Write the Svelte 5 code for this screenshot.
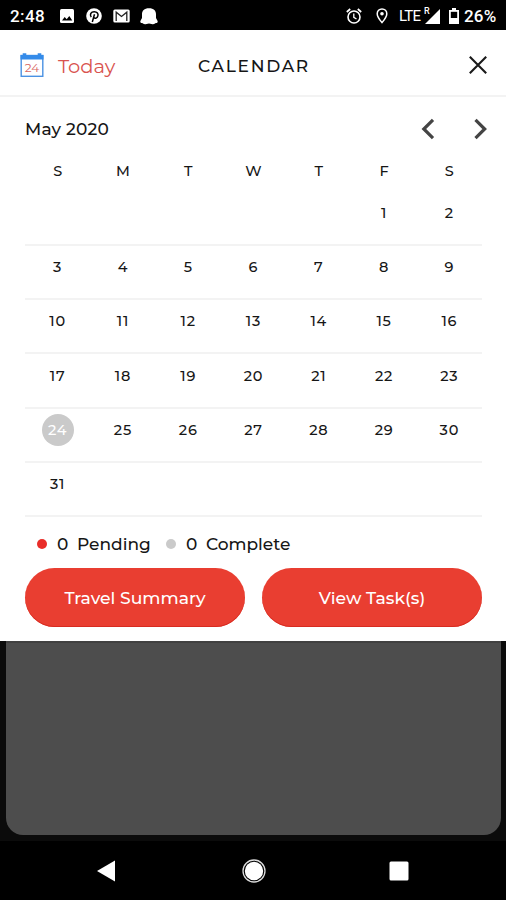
<script>
	const weekdays = ['S', 'M', 'T', 'W', 'T', 'F', 'S'];
	const firstDay = 5; // May 2020 starts on a Friday
	const daysInMonth = 31;
	let selected = $state(24);

	const weeks = [];
	for (let start = 1 - firstDay; start <= daysInMonth; start += 7) {
		weeks.push(
			weekdays.map((_, i) => {
				const day = start + i;
				return day > 0 && day <= daysInMonth ? day : null;
			}),
		);
	}
</script>

<div class="screen">
	<div class="status">
		<span class="time">2:48</span>
		<svg class="s-image" width="16" height="16" viewBox="0 0 16 16">
			<rect x="1" y="1" width="14" height="14" rx="1.5" fill="#fff" />
			<path d="M3 12.5 5.7 9l2 2.2L10.3 8l3 4.5z" fill="#000" />
		</svg>
		<svg class="s-pin" width="16" height="16" viewBox="0 0 16 16">
			<circle cx="8" cy="8" r="7.8" fill="#fff" />
			<path
				d="M5.2 9.2C3.4 6.3 5 3.7 8.2 3.7c3 0 4.3 2 3.7 4.2-.6 2.3-2.8 3-4 1.7M8.5 6.3 6.3 14"
				fill="none"
				stroke="#000"
				stroke-width="1.5"
			/>
		</svg>
		<svg class="s-mail" width="17" height="14" viewBox="0 0 17 14">
			<rect x=".3" y=".5" width="16.4" height="13" rx="1.5" fill="#fff" />
			<path
				d="M3.2 12V3.2l5.3 4.3 5.3-4.3V12"
				fill="none"
				stroke="#222"
				stroke-width="1.3"
			/>
		</svg>
		<svg class="s-ghost" width="18" height="17" viewBox="0 0 18 17">
			<path
				d="M9 .3c4.8 0 7 2.5 7 6.2V10l1.600 3c.4 1.300-.3 2.100-1.600 2.100-1 .5-1.900 1.300-3.400 1.100L9 15.500l-3.600.7c-1.500.2-2.400-.6-3.400-1.100-1.300 0-2-.8-1.600-2.100L2 10V6.500C2 2.800 4.200.3 9 .3z"
				fill="#fff"
			/>
		</svg>
		<span class="spacer"></span>
		<svg class="s-alarm" width="16" height="16" viewBox="0 0 16 16" fill="none" stroke="#fff">
			<circle cx="8" cy="9" r="6" stroke-width="1.6" />
			<path d="M.8 4 4.2 1M15.2 4 11.8 1" stroke-width="1.7" />
			<path d="M7.8 5.5v3.8l2.7 1.7" stroke-width="1.3" />
		</svg>
		<svg class="s-place" width="12" height="16" viewBox="0 0 12 16">
			<path
				d="M6 1C3.2 1 1.2 3 1.2 5.7 1.2 9 6 14.6 6 14.6S10.8 9 10.8 5.7C10.8 3 8.8 1 6 1z"
				fill="none"
				stroke="#fff"
				stroke-width="1.5"
			/>
			<circle cx="6" cy="5.8" r="1.8" fill="#fff" />
		</svg>
		<span class="lte">LTE</span>
		<span class="roam">R</span>
		<svg class="s-signal" width="15" height="15" viewBox="0 0 15 15">
			<path d="M15 0v15H0z" fill="#fff" />
		</svg>
		<svg class="s-battery" width="10" height="16" viewBox="0 0 10 16">
			<path d="M3 0h4v2h3v14H0V2h3z" fill="#fff" />
			<path d="M1.8 3.8h6.4V10H1.8z" fill="#000" />
		</svg>
		<span class="percent">26%</span>
	</div>

	<div class="sheet">
		<header>
			<button class="today">
				<svg width="24" height="26" viewBox="0 0 24 26">
					<rect x="1.2" y="3.5" width="21.6" height="20.8" fill="#fff" stroke="#4b92e3" stroke-width="1.4" />
					<path d="M.5 3h2.2V1.2h3.6V3h11.4V1.2h3.6V3h2.2v4.5H.5z" fill="#348be9" />
					<text x="12" y="19.8" text-anchor="middle">24</text>
				</svg>
				<span>Today</span>
			</button>
			<h1>CALENDAR</h1>
			<button class="close" aria-label="Close">
				<svg width="20" height="20" viewBox="0 0 20 20">
					<path d="M1.8 1.8 18.2 18.2M18.2 1.8 1.8 18.2" stroke="#1a1a1a" stroke-width="2.1" />
				</svg>
			</button>
		</header>

		<div class="month">
			<span>May 2020</span>
			<div class="arrows">
				<button aria-label="Previous month">
					<svg width="14" height="22" viewBox="0 0 14 22">
						<path d="M12 1.8 2.8 11l9.2 9.2" />
					</svg>
				</button>
				<button aria-label="Next month">
					<svg width="14" height="22" viewBox="0 0 14 22">
						<path d="m1.500 1.800 9.200 9.200-9.200 9.200" />
					</svg>
				</button>
			</div>
		</div>

		<div class="weekdays">
			{#each weekdays as name}
				<span>{name}</span>
			{/each}
		</div>

		{#each weeks as week}
			<div class="week">
				{#each week as day}
					<div class="cell">
						{#if day}
							<button class="day" class:selected={day === selected} onclick={() => (selected = day)}>
								{day}
							</button>
						{/if}
					</div>
				{/each}
			</div>
		{/each}

		<div class="legend">
			<i class="dot pending"></i>
			<span class="count">0</span>
			<span class="pending-label">Pending</span>
			<i class="dot"></i>
			<span class="count">0</span>
			<span>Complete</span>
		</div>

		<div class="actions">
			<button>Travel Summary</button>
			<button>View Task(s)</button>
		</div>
	</div>

	<div class="backdrop">
		<div class="card"></div>
	</div>

	<nav>
		<svg width="18" height="22" viewBox="0 0 18 22">
			<path d="M18 .5v21L0 11z" fill="#fff" />
		</svg>
		<svg class="home" width="24" height="24" viewBox="0 0 24 24">
			<circle cx="12" cy="12" r="11" fill="none" stroke="#ddd" stroke-width="1.3" />
			<circle cx="12" cy="12" r="9.2" fill="#fff" />
		</svg>
		<svg width="20" height="20" viewBox="0 0 20 20">
			<rect x=".5" y=".5" width="19" height="19" rx="1.5" fill="#fff" />
		</svg>
	</nav>
</div>

<style>
	:global(body) {
		margin: 0;
		background: #000;
	}

	.screen {
		display: flex;
		flex-direction: column;
		width: 506px;
		height: 900px;
		overflow: hidden;
		background: #000;
		color: #161616;
		font-family: Montserrat, Inter, sans-serif;
	}

	button {
		padding: 0;
		border: 0;
		background: none;
		color: inherit;
		font: inherit;
		letter-spacing: inherit;
	}

	svg {
		display: block;
		flex: none;
	}

	.status {
		display: flex;
		align-items: center;
		box-sizing: border-box;
		flex: none;
		height: 30px;
		padding: 2px 9px 0 10px;
		color: #fff;
		font: 500 17px/28px Roboto, sans-serif;
	}

	.time {
		width: 49px;
		letter-spacing: 0.4px;
	}

	.s-image {
		margin-right: 11px;
	}

	.s-pin {
		margin-right: 11px;
	}

	.s-mail {
		margin-right: 10px;
	}

	.spacer {
		flex: 1;
	}

	.s-alarm {
		margin-right: 14px;
	}

	.s-place {
		margin-right: 11px;
	}

	.lte {
		width: 25px;
		font-size: 15px;
		font-weight: 400;
		letter-spacing: -0.7px;
	}

	.roam {
		width: 1px;
		margin-bottom: 11px;
		font-size: 9px;
		line-height: 12px;
	}

	.s-signal {
		margin-right: 9px;
	}

	.s-battery {
		margin-right: 5px;
	}

	.percent {
		width: 33px;
		letter-spacing: 0.2px;
	}

	.sheet {
		display: flex;
		flex-direction: column;
		flex: none;
		height: 611px;
		background: #fff;
	}

	header {
		display: grid;
		grid-template-columns: 1fr auto 1fr;
		align-items: center;
		box-sizing: border-box;
		height: 67px;
		padding: 5px 18px 0 20px;
		border-bottom: 2px solid #f3f3f3;
	}

	.today {
		display: flex;
		align-items: center;
		gap: 14px;
		margin-top: -1px;
		color: #d9544f;
		font-size: 19.5px;
	}

	.today span {
		padding-top: 2px;
	}

	.today text {
		fill: #d8665f;
		font-size: 12px;
	}

	h1 {
		margin: 1px 0 0;
		font-size: 17px;
		font-weight: 500;
		letter-spacing: 1.7px;
	}

	.close {
		justify-self: end;
		margin-top: -1px;
	}

	.month {
		display: flex;
		align-items: center;
		justify-content: space-between;
		height: 64px;
		padding: 0 18px 0 25px;
		font-size: 17px;
		font-weight: 500;
		letter-spacing: 0.2px;
	}

	.arrows {
		display: flex;
		gap: 39px;
	}

	.arrows path {
		fill: none;
		stroke: #444;
		stroke-width: 3.2;
	}

	.weekdays,
	.week {
		display: grid;
		grid-template-columns: repeat(7, 1fr);
		margin: 0 24px 0 25px;
		text-align: center;
		font-size: 14.5px;
		font-weight: 500;
	}

	.weekdays {
		height: 30.5px;
		line-height: 21px;
	}

	.week {
		box-sizing: border-box;
		height: 54.3px;
		padding-top: 5.4px;
		border-bottom: 2px solid #f3f3f3;
		letter-spacing: 0.8px;
	}

	.cell {
		display: flex;
		justify-content: center;
	}

	.day {
		width: 32px;
		height: 32px;
		border-radius: 50%;
	}

	.selected {
		background: #cacaca;
		color: #fff;
	}

	.legend {
		display: flex;
		align-items: center;
		height: 50.5px;
		padding: 2.6px 37px 0;
		box-sizing: border-box;
		font-size: 17px;
		font-weight: 500;
	}

	.dot {
		width: 10px;
		height: 10px;
		margin-right: 10px;
		border-radius: 50%;
		background: #cacaca;
	}

	.dot.pending {
		background: #e92d29;
	}

	.count {
		width: 20px;
	}

	.pending-label {
		width: 89px;
	}

	.actions {
		display: flex;
		gap: 17px;
		padding: 0 24px 0 25px;
	}

	.actions button {
		flex: 1;
		height: 59px;
		border-radius: 30px;
		background: #e93e31;
		box-shadow: inset 0 -1px #d72b20;
		color: #fff;
		font-size: 17.2px;
		font-weight: 500;
	}

	.backdrop {
		height: 200px;
		padding: 0 5px 0 6px;
		background: #0b0b0b;
	}

	.card {
		box-sizing: border-box;
		height: 194px;
		border-top: 2px solid #414141;
		border-radius: 0 0 17px 17px;
		background: #4d4d4d;
	}

	nav {
		display: flex;
		align-items: center;
		justify-content: space-between;
		flex: 1;
		padding: 0 97px;
	}

	.home {
		margin-left: 3px;
	}
</style>
